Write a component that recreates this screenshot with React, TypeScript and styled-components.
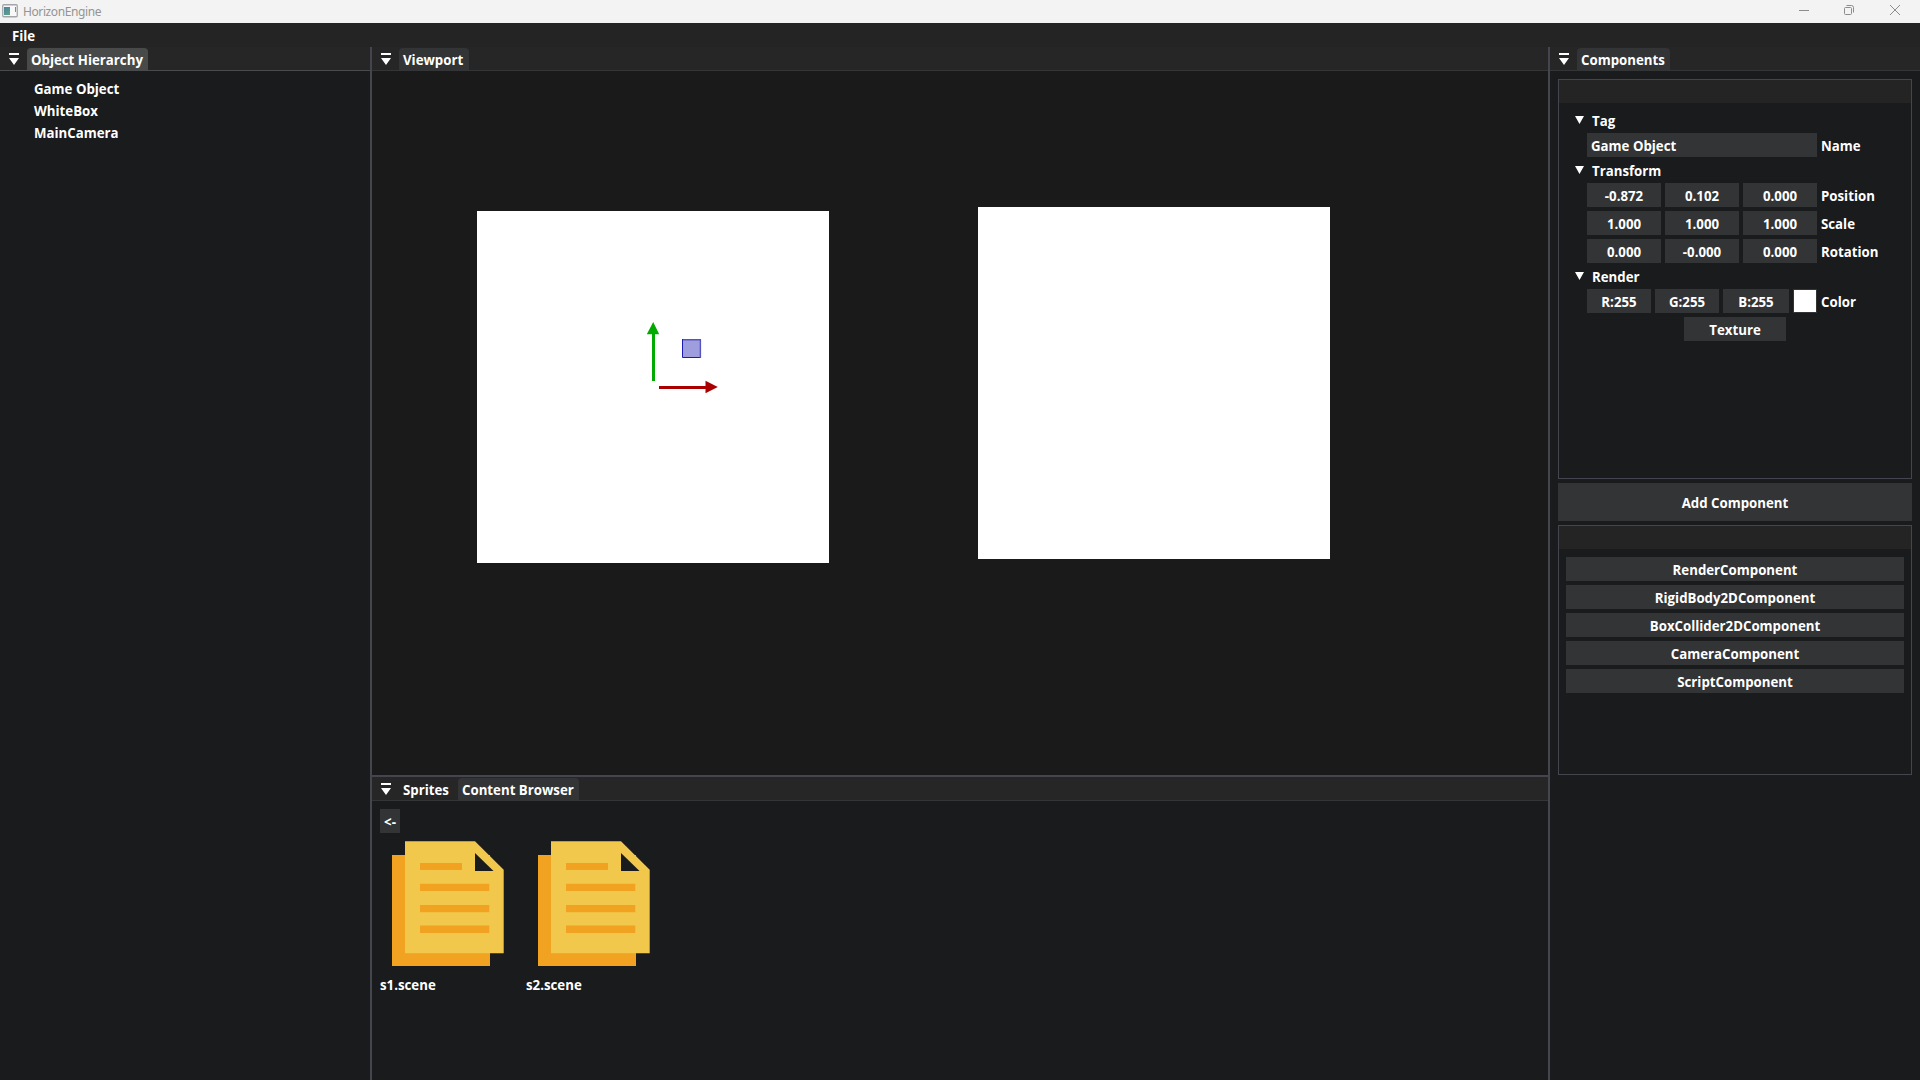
import React from "react";
import styled, { createGlobalStyle } from "styled-components";

const LINE = "#44454f";
const BG = "#1a1b1c";
const FRAME = "#333436";

const Global = createGlobalStyle`
  * { box-sizing: border-box; }
  body { margin: 0; background: ${BG}; overflow: hidden; }
`;
const Shell = styled.div`
  width: 1920px; height: 1080px; display: flex; flex-direction: column;
  background: ${BG}; color: #fff;
  font: 700 13.25px/18px "Open Sans", "Noto Sans", sans-serif;
  letter-spacing: 0; white-space: nowrap; font-kerning: none;
`;
const TitleBar = styled.header`
  height: 23px; flex: none; display: flex; align-items: center; background: #f3f3f3; color: #949494;
  font: 400 12px/18px "Noto Sans", sans-serif; letter-spacing: -0.4px; padding-left: 2px;
`;
const AppIcon = styled.svg`width: 16px; height: 14px; margin-bottom: 1px;`;
const WindowControls = styled.svg`width: 121px; height: 23px;`;
const AppName = styled.span`flex: 1; padding: 1px 0 0 5px;`;
const MenuBar = styled.nav`height: 24px; flex: none; background: #242424; padding: 4px 12px;`;
const Dock = styled.main`flex: 1; display: flex; min-height: 0;`;
const SidePanel = styled.section`width: 370px; flex: none; display: flex; flex-direction: column;`;
const Center = styled.div`
  flex: 1; display: flex; flex-direction: column;
  border-left: 2px solid ${LINE}; border-right: 2px solid ${LINE};
`;
const ViewportPanel = styled.section`height: 728px; flex: none; display: flex; flex-direction: column;`;
const BrowserPanel = styled.section`flex: 1; border-top: 2px solid ${LINE};`;
const TabBar = styled.div<{ $line: string }>`
  height: 24px; flex: none; display: flex; align-items: flex-end; background: #262627;
  border-bottom: 1px solid ${p => p.$line}; padding-left: 9px;
`;
const CollapseIcon = styled.svg`width: 10px; height: 12px; margin: 0 8px 5px 0; flex: none;`;
const Tab = styled.span<{ $bg?: string; $w: number }>`
  width: ${p => p.$w}px; height: 22px; padding: 3px 0 0 4px; line-height: 18px; border-radius: 4px 4px 0 0;
  background: ${p => p.$bg ?? "transparent"};
`;
const Tree = styled.ul`
  list-style: none; margin: 0; padding: 9px 0 0 34px; display: flex; flex-direction: column; gap: 4px;
`;
const Canvas = styled.div`flex: 1; background: #1a1a1a; position: relative;`;
const Sprite = styled.div<{ $x: number; $y: number }>`
  position: absolute; left: ${p => p.$x}px; top: ${p => p.$y}px; width: 352px; height: 352px; background: #fff;
`;
const Gizmo = styled.svg`position: absolute; left: 268px; top: 244px; width: 90px; height: 90px;`;
const Browser = styled.div`padding: 8px; display: flex; flex-direction: column; align-items: flex-start;`;
const Files = styled.div`display: flex; gap: 18px; padding-top: 4px;`;
const File = styled.figure`margin: 0; width: 128px;`;
const FileIcon = styled.svg`display: block; width: 128px; height: 136px;`;
const FileName = styled.figcaption`padding-top: 3px;`;
const Button = styled.button<{ $w?: string; $h?: number }>`
  width: ${p => p.$w ?? "100%"}; height: ${p => p.$h ?? 24}px; flex: none; border: 0; padding: 2px 0 0;
  background: ${FRAME}; color: #fff; font: inherit; letter-spacing: inherit; text-align: center;
`;
const Inspector = styled.div`padding: 8px; display: flex; flex-direction: column; gap: 4px;`;
const Box = styled.div<{ $h: number }>`
  height: ${p => p.$h}px; border: 1px solid ${LINE}; display: flex; flex-direction: column;
`;
const BoxTitle = styled.div`height: 23px; flex: none; background: #242424;`;
const BoxBody = styled.div<{ $side: number }>`
  padding: 8px ${p => p.$side}px; display: flex; flex-direction: column; gap: 4px;
`;
const TreeHead = styled.div`height: 18px; display: flex; align-items: center; padding-left: 8px; padding-top: 2px;`;
const Arrow = styled.svg`width: 9px; height: 8px; margin: -3px 8px 0 0;`;
const Row = styled.div`height: 24px; display: flex; gap: 4px; padding-left: 20px;`;
const Field = styled.span<{ $w: number; $left?: boolean }>`
  width: ${p => p.$w}px; height: 24px; padding: ${p => (p.$left ? "4px 4px 0" : "4px 0 0")};
  text-align: ${p => (p.$left ? "left" : "center")}; background: ${FRAME};
`;
const Swatch = styled.span`width: 24px; height: 24px; border: 1px solid ${FRAME}; background: #fff;`;
const Label = styled.span`padding-top: 4px;`;
const TextureRow = styled.div`display: flex; justify-content: center;`;

const Collapse = () => (
  <CollapseIcon viewBox="0 0 10 12" fill="#fff"><path d="M0 0h10v2H0zM0 5h10L5 12z" /></CollapseIcon>
);
const Section = ({ name }: { name: string }) => (
  <TreeHead><Arrow viewBox="0 0 9 8" fill="#fff"><path d="M0 0h9L4.5 8z" /></Arrow>{name}</TreeHead>
);
const SceneFile = ({ name }: { name: string }) => (
  <File>
    <FileIcon viewBox="0 0 128 136">
      <path fill="#f0a220" d="M12 18h98v111H12z" />
      <path fill="#f2c84c" d="M25 4.3h70l28.7 28.5v83.5H25z" />
      <path fill={BG} d="M95 16v18h18.5z" />
      <path fill="#f0a220" d="M40 26h42v7H40zM40 46.7h69.3v7.2H40zM40 68h69.3v7.2H40zM40 88.5h69.3v7.5H40z" />
    </FileIcon>
    <FileName>{name}</FileName>
  </File>
);

const vectors: [string, string[]][] = [
  ["Position", ["-0.872", "0.102", "0.000"]],
  ["Scale", ["1.000", "1.000", "1.000"]],
  ["Rotation", ["0.000", "-0.000", "0.000"]],
];
const addable = ["RenderComponent", "RigidBody2DComponent", "BoxCollider2DComponent", "CameraComponent", "ScriptComponent"];

export default function App() {
  return (
    <Shell>
      <Global />
      <TitleBar>
        <AppIcon viewBox="0 0 16 14">
          <defs>
            <linearGradient id="g" x2="1" y2="1"><stop stopColor="#4d7f9c" /><stop offset="1" stopColor="#63b183" /></linearGradient>
          </defs>
          <rect x=".75" y=".75" width="14.5" height="12" rx="1" fill="#f8f8f8" stroke="#a2a6aa" strokeWidth="1.3" />
          <path fill="url(#g)" d="M2 3h6v8H2zM13 3h1v5h-1z" />
        </AppIcon>
        <AppName>HorizonEngine</AppName>
        <WindowControls viewBox="0 0 121 23" fill="none" stroke="#8d8d8d">
          <path d="M0 10.5h10" />
          <rect x="45.5" y="7.5" width="7" height="7" rx="1" />
          <path d="M47.5 5.5h5a2 2 0 0 1 2 2v5" />
          <path d="M91 5l10 10M101 5L91 15" />
        </WindowControls>
      </TitleBar>
      <MenuBar>File</MenuBar>
      <Dock>
        <SidePanel>
          <TabBar $line="#484a4b"><Collapse /><Tab $w={121} $bg="#484a49">Object Hierarchy</Tab></TabBar>
          <Tree><li>Game Object</li><li>WhiteBox</li><li>MainCamera</li></Tree>
        </SidePanel>
        <Center>
          <ViewportPanel>
            <TabBar $line="#343537"><Collapse /><Tab $w={70} $bg={FRAME}>Viewport</Tab></TabBar>
            <Canvas>
              <Sprite $x={105} $y={140} />
              <Sprite $x={606} $y={136} />
              <Gizmo viewBox="640 315 90 90">
                <path fill="#00aa00" d="M652 334h3v47h-3zM653.2 322l6 12.2h-12.4z" />
                <path fill="#aa0000" d="M659 386h47v3h-47zM717.8 387l-12.3 6.2v-12.4z" />
                <rect x="682.5" y="339.5" width="18" height="18" fill="#9e9edf" />
                <path fill="none" stroke="#1c1cb0" d="M682.5 339v18.5H700" />
                <path fill="none" stroke="#5454c0" strokeWidth="1.4" d="M683 339.7h17.4V358" />
              </Gizmo>
            </Canvas>
          </ViewportPanel>
          <BrowserPanel>
            <TabBar $line="#343537"><Collapse /><Tab $w={59}>Sprites</Tab><Tab $w={121} $bg={FRAME}>Content Browser</Tab></TabBar>
            <Browser>
              <Button $w="20px">&lt;-</Button>
              <Files><SceneFile name="s1.scene" /><SceneFile name="s2.scene" /></Files>
            </Browser>
          </BrowserPanel>
        </Center>
        <SidePanel>
          <TabBar $line="#343537"><Collapse /><Tab $w={93} $bg={FRAME}>Components</Tab></TabBar>
          <Inspector>
            <Box $h={400}>
              <BoxTitle />
              <BoxBody $side={8}>
                <Section name="Tag" />
                <Row><Field $w={230} $left>Game Object</Field><Label>Name</Label></Row>
                <Section name="Transform" />
                {vectors.map(([label, values]) => (
                  <Row key={label}>
                    {values.map((v, i) => <Field key={i} $w={74}>{v}</Field>)}
                    <Label>{label}</Label>
                  </Row>
                ))}
                <Section name="Render" />
                <Row>
                  <Field $w={64}>R:255</Field><Field $w={64}>G:255</Field><Field $w={66}>B:255</Field>
                  <Swatch /><Label>Color</Label>
                </Row>
                <TextureRow><Button $w="102px">Texture</Button></TextureRow>
              </BoxBody>
            </Box>
            <Button $h={38}>Add Component</Button>
            <Box $h={250}>
              <BoxTitle />
              <BoxBody $side={7}>{addable.map(n => <Button key={n}>{n}</Button>)}</BoxBody>
            </Box>
          </Inspector>
        </SidePanel>
      </Dock>
    </Shell>
  );
}
